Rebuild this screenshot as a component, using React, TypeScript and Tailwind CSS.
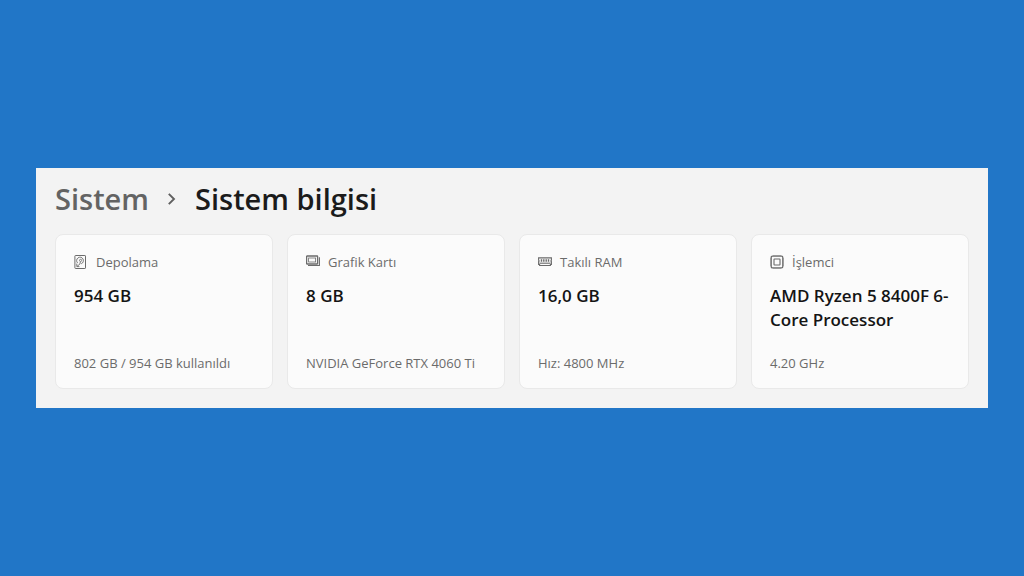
import React from 'react';

// Drive with a platter, a spindle and the read arm
const StorageIcon = () => (
    <svg viewBox="0 0 14 14" fill="none" stroke="currentColor" className="w-3.5 h-3.5" aria-hidden="true">
        <rect x="0.9" y="0.5" width="10.6" height="13" rx="0.6" />
        <path d="M3.6 8A3.4 3.4 0 1 1 7.2 8.8" strokeWidth={0.9} />
        <circle cx="6.6" cy="5.4" r="1.1" strokeWidth={0.8} />
        <path d="M6.4 6.8 5.8 9.2 3.2 11.2M2.8 8.6v3h2.6" strokeWidth={0.9} />
    </svg>
);

const GraphicsIcon = () => (
    <svg viewBox="0 0 14 14" fill="none" stroke="currentColor" className="w-3.5 h-3.5" aria-hidden="true">
        <rect x="0.6" y="1" width="11" height="8" rx="0.4" strokeWidth={1.3} />
        <rect x="2.6" y="3" width="7" height="4" strokeWidth={0.8} />
        <path d="M13.4 2.2v8.3H2" strokeWidth={1.1} />
    </svg>
);

const MemoryIcon = () => (
    <svg viewBox="0 0 14 14" fill="none" stroke="currentColor" className="w-3.5 h-3.5" aria-hidden="true">
        <path d="M0.6 2.9h12.8v2.4l-.6.6.6.6v3h-1v1H1.6v-1h-1v-3l.6-.6-.6-.6z" strokeWidth={1.1} />
        <path d="M3.5 4.2v2.6M5.8 4.2v2.6M8.2 4.2v2.6M10.5 4.2v2.6" strokeWidth={1.4} />
        <path d="M1.4 8.2h11.2" strokeWidth={1.1} />
    </svg>
);

const ProcessorIcon = () => (
    <svg viewBox="0 0 14 14" fill="none" stroke="currentColor" className="w-3.5 h-3.5" aria-hidden="true">
        <rect x="1.2" y="1.2" width="11.6" height="11.6" rx="1.2" strokeWidth={1.3} />
        <rect x="4" y="4" width="6" height="6" rx="0.4" strokeWidth={1.1} />
        <path d="M3.5 0.4h7M3.5 13.6h7M0.4 3.5v7M13.6 3.5v7" strokeWidth={0.8} strokeDasharray="1 1" />
    </svg>
);

const cards = [
    { title: 'Depolama', value: '954 GB', detail: '802 GB / 954 GB kullanıldı', icon: <StorageIcon /> },
    { title: 'Grafik Kartı', value: '8 GB', detail: 'NVIDIA GeForce RTX 4060 Ti', icon: <GraphicsIcon /> },
    { title: 'Takılı RAM', value: '16,0 GB', detail: 'Hız: 4800 MHz', icon: <MemoryIcon /> },
    { title: 'İşlemci', value: 'AMD Ryzen 5 8400F 6-Core Processor', detail: '4.20 GHz', icon: <ProcessorIcon /> },
];

const App = () => {
    return (
        <div lang="tr" className="min-h-screen flex items-center bg-[#2176c7] px-9 font-['Open_Sans','Noto_Sans',sans-serif]">
            <main className="w-full bg-[#f3f3f3] px-[19px] pt-[13px] pb-[19px]">
                <nav aria-label="Konum" className="flex items-center gap-[19px] text-[29px] leading-9 font-semibold">
                    <a href="#" className="text-[#636363]">Sistem</a>
                    <svg viewBox="0 0 8 14" fill="none" stroke="#5f5f5f" strokeWidth={1.9} className="w-2 h-3.5" aria-hidden="true">
                        <path d="M0.8 1.8 6 7 0.8 12.2" />
                    </svg>
                    <h1 className="text-[#1b1b1b]">Sistem bilgisi</h1>
                </nav>
                <div className="mt-[17px] grid grid-cols-4 gap-3.5">
                    {cards.map((card) => (
                        <section key={card.title} className="flex flex-col min-h-[155px] rounded-lg border border-[#e9e9e9] bg-[#fbfbfb] px-[18px] pt-[17px] pb-[15px]">
                            <div className="flex items-center gap-2 text-[#6b6b6b]">
                                {card.icon}
                                <h2 className="text-[13px] leading-5">{card.title}</h2>
                            </div>
                            <p className="mt-3 text-[17px] leading-6 font-semibold text-[#141414]">{card.value}</p>
                            <p className="mt-auto text-[13px] leading-5 text-[#6b6b6b]">{card.detail}</p>
                        </section>
                    ))}
                </div>
            </main>
        </div>
    );
};

export default App;
